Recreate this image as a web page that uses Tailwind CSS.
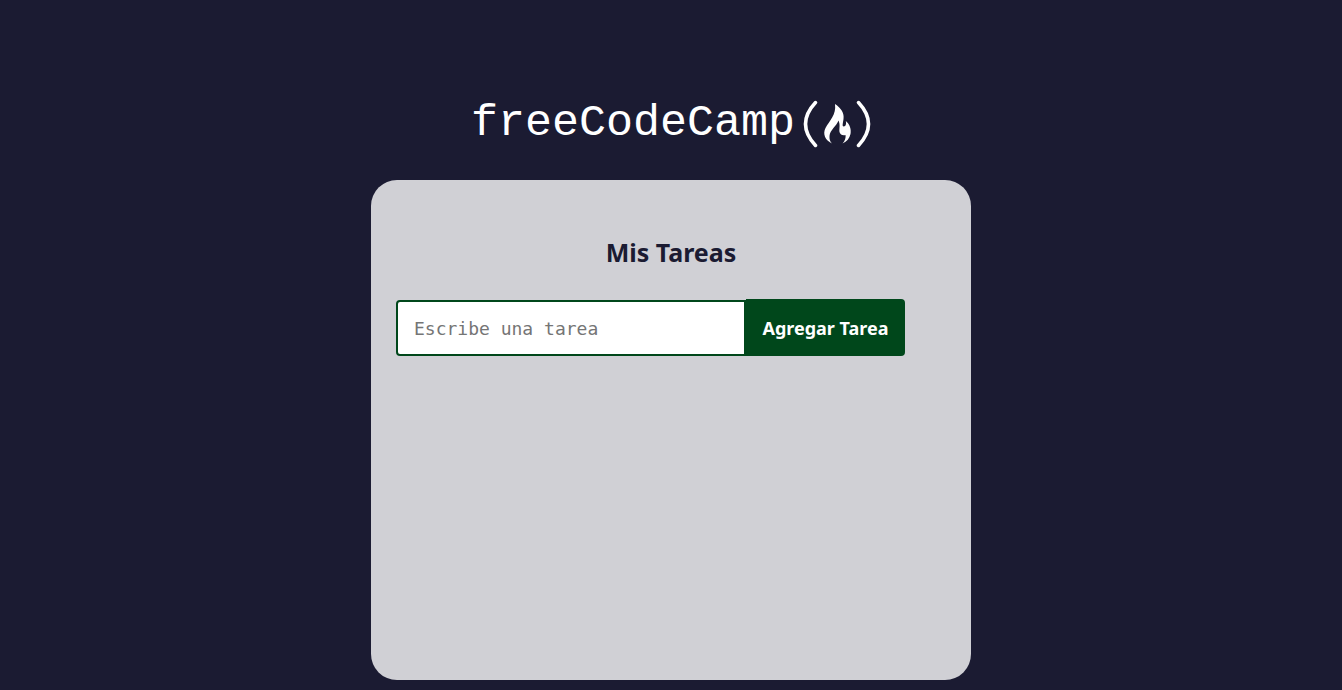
<!DOCTYPE html>
<html lang="es">
<head>
<meta charset="utf-8">
<meta name="viewport" content="width=device-width, initial-scale=1">
<title>Mis Tareas</title>
<script src="https://cdn.jsdelivr.net/npm/@tailwindcss/browser@4"></script>
</head>
<body class="flex min-h-screen flex-col bg-[#1b1b32] font-['Noto_Sans',sans-serif] text-[#1b1b32]">
<main class="flex grow flex-col items-center pt-24 pb-[6px]">
  <header class="flex h-14 items-center justify-center gap-2 text-white" aria-label="freeCodeCamp">
    <span class="font-['Liberation_Mono',monospace] text-[45px] leading-[56px]">freeCodeCamp</span>
    <svg class="h-[50px] w-[68px]" viewBox="0 0 68 50" fill="none" aria-hidden="true">
      <path d="M12.500 3.500Q-7.500 25 12.500 46.500M55.500 3.500Q75.500 25 55.500 46.500" stroke="currentColor" stroke-width="3.500" stroke-linecap="round"/>
      <path d="M32 5C38 9 41.500 14 40.500 20C40 24 38.800 27.500 40.800 27.500C42.800 27.500 43.500 24.500 42.800 22C46.500 25 48.500 30 47.500 35C46.500 39.500 44 42.500 39.500 44.500C42 42 43 38.500 42.500 36C40 37 37 35.500 36.500 33C36 30 37.500 26 35.500 21.500C33.500 27 27 31 26.500 37C26.300 40 27 42.500 29 44.500C22 41 19.500 35 22.500 29C26.500 21.500 33.500 16 32 5Z" fill="currentColor"/>
    </svg>
  </header>
  <section class="mt-7 flex min-h-[500px] w-full max-w-[600px] flex-col rounded-[26px] bg-[#d0d0d5] px-[25px] pt-[54px]">
    <h1 class="text-center text-[25px] leading-9 font-bold">Mis Tareas</h1>
    <form class="mt-[29px] flex items-end">
      <input type="text" aria-label="Tarea" placeholder="Escribe una tarea" class="h-14 w-[350px] min-w-0 rounded-l border-2 border-[#00471b] bg-white px-4 font-['DejaVu_Sans_Mono',monospace] text-lg outline-none placeholder:text-[#757575]">
      <button type="button" class="h-[57px] w-[159px] shrink-0 rounded-r bg-[#00471b] text-lg font-bold whitespace-nowrap text-white">Agregar Tarea</button>
    </form>
  </section>
</main>
</body>
</html>
